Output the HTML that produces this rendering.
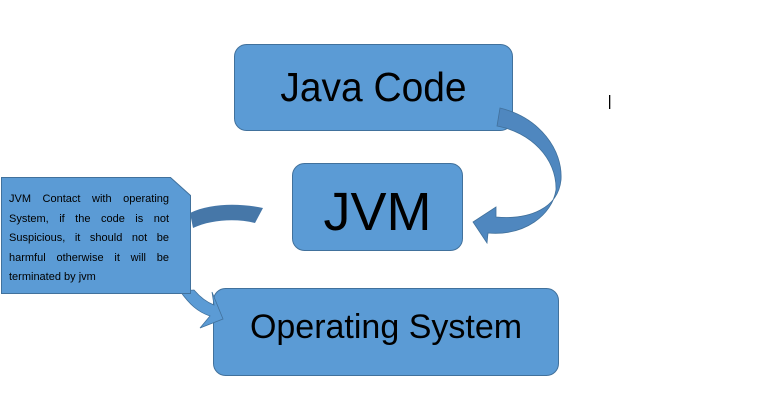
<!DOCTYPE html>
<html><head><style>
body{margin:0;width:765px;height:408px;background:#fff;overflow:hidden;font-family:"Liberation Sans",sans-serif}
svg{position:absolute;left:0;top:0}
.t{position:absolute;color:#000;font-family:"Liberation Sans",sans-serif;white-space:nowrap}
.c{position:absolute;left:9px;top:190px;width:160px;font-size:11px;line-height:19.6px}
.c div{text-align:justify;text-align-last:justify;height:19.6px}
.c div.l{text-align-last:left}
</style></head><body>
<svg width="765" height="408">
<rect x="234.5" y="44.5" width="278" height="86" rx="12" fill="#5b9bd5" stroke="#41719c"/>
<rect x="292.5" y="163.5" width="170" height="87" rx="12" fill="#5b9bd5" stroke="#41719c"/>
<rect x="213.5" y="288.5" width="345" height="87" rx="12" fill="#5b9bd5" stroke="#41719c"/>
<path d="M500,108 C540,118 563,150 561,180 C558,208 530,220 496,217 L496,207 L473,222 L487,243 L488,233 C525,236 552,215 556,190 C557,158 530,132 497,126 Z" fill="#4f87bf" stroke="#41719c" stroke-width="0.8"/>
<path d="M190,213 C210,203 240,203 263,208 L255,223 C235,218 210,220 193,228 Z" fill="#4677a8"/>
<path d="M180,291 C190,305 198,312 210,316 L200,328 L223,319 L212,292 L214,305 C206,302 200,297 194,290 Z" fill="#5b9bd5" stroke="#41719c" stroke-width="0.8"/>
<path d="M1.5,177.5 L170.5,177.5 L190.5,195.5 L190.5,293.5 L1.5,293.5 Z" fill="#5b9bd5" stroke="#41719c"/>
<rect x="609" y="95" width="1.3" height="14" fill="#000"/>
</svg>
<div class="t" style="left:234px;top:64px;width:279px;text-align:center;font-size:41px;transform:scaleX(0.95)">Java Code</div>
<div class="t" style="left:292px;top:181px;width:171px;text-align:center;font-size:54px;line-height:62px">JVM</div>
<div class="t" style="left:213px;top:308px;width:346px;text-align:center;font-size:34px">Operating System</div>
<div class="t c">
<div>JVM Contact with operating</div>
<div>System, if the code is not</div>
<div>Suspicious, it should not be</div>
<div>harmful otherwise it will be</div>
<div class="l">terminated by jvm</div>
</div>
</body></html>
